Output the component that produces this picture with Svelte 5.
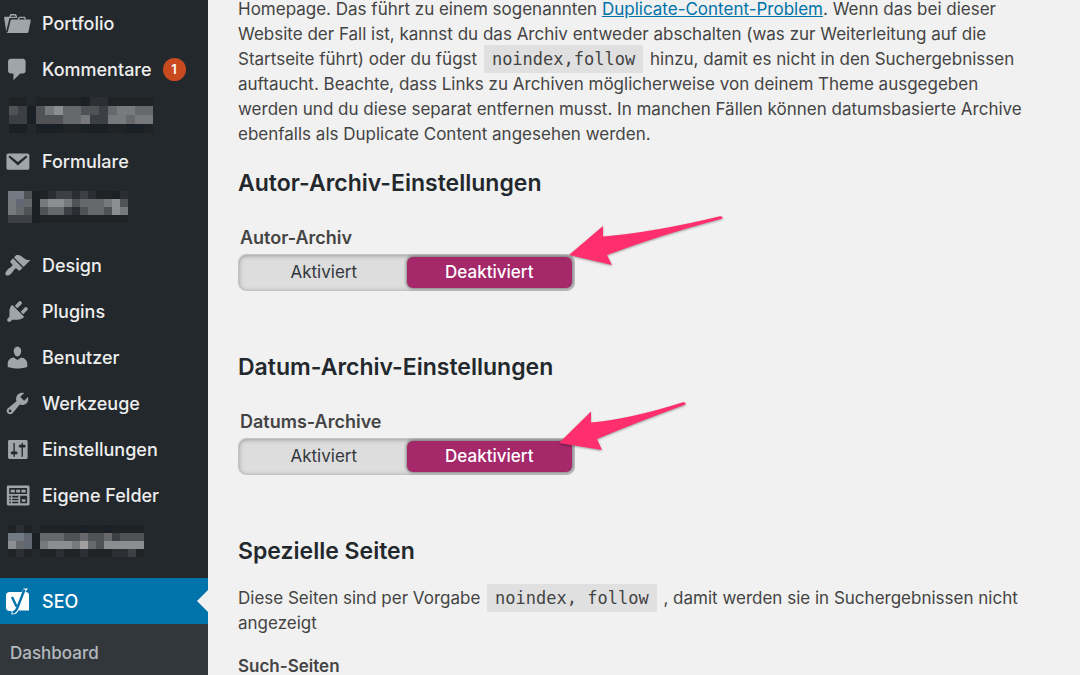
<script lang="ts">
  interface IMenuItem {
    label?: string;
    icon?: string;
    count?: number;
    mosaic?: { cell: number; left: number; rows: string[] };
  }

  // one letter per square, see shades
  const shades: Record<string, string> = {
    a: "#1b1f26",
    b: "#1f2326",
    c: "#2b2f33",
    d: "#3c3f44",
    e: "#505256",
    f: "#66686c",
    g: "#77797d",
    h: "#8c8e91",
    i: "#a0a0a1",
    m: "#606772",
    n: "#747a84",
  };

  const icons: Record<string, string> = {
    portfolio:
      "M4 5H.78c-.37 0-.74.32-.69.84l1.56 9.99S3.5 8.47 3.86 6.7c.11-.53.61-.7.98-.7H10s-.7-2.08-.77-2.31C9.11 3.25 8.89 3 8.45 3H5.14c-.36 0-.7.23-.8.64C4.25 4.04 4 5 4 5zm4.88 0h-4s.42-1 .87-1h2.13c.48 0 1 1 1 1zM2.67 16.25c-.31.47-.76.75-1.26.75h15.73c.54 0 .92-.31 1.03-.83.44-2.19 1.68-8.44 1.68-8.44.07-.5-.3-.73-.62-.73H16V5.53c0-.16-.26-.53-.66-.53h-3.76c-.52 0-.87.58-.87.58L10 7H5.59c-.32 0-.63.19-.69.5 0 0-1.59 6.7-1.72 7.33-.07.37-.22.99-.51 1.42zM15.38 7H11s.58-1 1.13-1h2.29c.71 0 .96 1 .96 1z",
    comments:
      "M5 2h9c1.1 0 2 .9 2 2v7c0 1.1-.9 2-2 2h-2l-5 5v-5H5c-1.1 0-2-.9-2-2V4c0-1.1.9-2 2-2z",
    mail: "M3.2 4h14.2c.8 0 1.4.6 1.4 1.4v9.4c0 .8-.6 1.4-1.4 1.4H3.2c-.8 0-1.4-.6-1.4-1.4V5.4c0-.8.6-1.4 1.4-1.4zM4.3 5.5l-1 1.2 7 6.3 7-6.3-1-1.2-6 4.9z",
    design:
      "M14.48 11.06L7.41 3.99l1.5-1.5c.5-.56 2.3-.47 3.51.32 1.21.8 1.43 1.28 2.91 2.1 1.18.64 2.45 1.26 4.45.85zm-.71.71L6.7 4.7 4.93 6.47c-.39.39-.39 1.02 0 1.41l1.06 1.06c.39.39.39 1.03 0 1.42-.6.6-1.43 1.11-2.21 1.69-.35.26-.7.53-1.01.84C1.43 14.23.4 16.08 1.4 17.07c.99 1 2.84-.03 4.18-1.36.31-.31.58-.66.85-1.02.57-.78 1.08-1.61 1.69-2.21.39-.39 1.02-.39 1.41 0l1.06 1.06c.39.39 1.02.39 1.41 0z",
    plugins:
      "M13.11 4.36L9.87 7.6 8 5.73l3.24-3.24c.35-.34 1.05-.2 1.56.32.52.51.66 1.21.31 1.55zm-8 1.77l.91-1.12 9.01 9.01-1.19.84c-.71.71-2.63 1.16-3.82 1.16H6.14L4.9 17.26c-.59.59-1.54.59-2.12 0-.59-.58-.59-1.53 0-2.12l1.24-1.24v-3.88c0-1.13.4-3.19 1.09-3.89zm7.26 3.97l3.24-3.24c.34-.35 1.04-.21 1.55.31.52.51.66 1.21.31 1.55l-3.24 3.25z",
    users:
      "M10 9.25c-2.27 0-2.73-3.44-2.73-3.44C7 4.02 7.82 2 9.97 2c2.16 0 2.98 2.02 2.71 3.81 0 0-.41 3.44-2.68 3.44zm0 2.57L12.72 10c2.39 0 4.52 2.33 4.52 4.53v2.49s-3.65 1.13-7.24 1.13c-3.65 0-7.24-1.13-7.24-1.13v-2.49c0-2.25 1.94-4.48 4.47-4.48z",
    tools:
      "M16.68 9.77c-1.34 1.34-3.3 1.67-4.95.99l-5.41 6.52c-.99.99-2.59.99-3.58 0s-.99-2.59 0-3.57l6.52-5.42c-.68-1.65-.35-3.61.99-4.95 1.28-1.28 3.12-1.62 4.72-1.06l-2.89 2.89 2.82 2.82 2.86-2.87c.53 1.58.18 3.39-1.08 4.65zM3.81 16.21c.4.39 1.04.39 1.43 0 .4-.4.4-1.04 0-1.43-.39-.4-1.03-.4-1.43 0-.39.39-.39 1.03 0 1.43z",
    settings:
      "M17.5 16V4c0-.55-.45-1-1-1H4c-.55 0-1 .45-1 1v12c0 .55.45 1 1 1h12.5c.55 0 1-.45 1-1zM8 11.5h1c.55 0 1 .45 1 1s-.45 1-1 1H8v1.5c0 .28-.22.5-.5.5s-.5-.22-.5-.5v-1.5H6c-.55 0-1-.45-1-1s.45-1 1-1h1V5.5c0-.28.22-.5.5-.5s.5.22.5.5zm5-3h-1c-.55 0-1-.45-1-1s.45-1 1-1h1V5.5c0-.28.22-.5.5-.5s.5.22.5.5v1h1c.55 0 1 .45 1 1s-.45 1-1 1h-1V15c0 .28-.22.5-.5.5s-.5-.22-.5-.5z",
    fields:
      "M3 2.600h15c.5 0 .9.4.9.9v13c0 .5-.4.9-.9.9H3c-.5 0-.9-.4-.9-.9v-13c0-.5.4-.9.9-.9zM3.900 4.500v4.300h13.200V4.500zM5 5.700h3v2H5zm4 0h3v2H9zm4 0h3v2h-3zM3.900 10.200v1.200h1.200v-1.200zm2.200 0v1.200h4.500v-1.200zm-2.200 2.200v1.200h1.200v-1.200zm2.200 0v1.200h4.500v-1.200zm-2.200 2.200v1.200h1.200v-1.200zm2.200 0v1.200h4.500v-1.200zM12 10.200v5.600h5.100v-5.600zm1.200 2.600h2.700v1.800h-2.700z",
  };

  const contentMenu: IMenuItem[] = [
    { label: "Portfolio", icon: "portfolio" },
    { label: "Kommentare", icon: "comments", count: 1 },
    {
      mosaic: {
        cell: 9,
        left: 9,
        rows: ["bb.bbbbbaccbbbbb", "edaeghffeedfggff", "ddaeeeffgddggfgg", "aa.aaabbaaabbaab"],
      },
    },
    { label: "Formulare", icon: "mail" },
    {
      mosaic: {
        cell: 8,
        left: 8,
        rows: ["nneabcddcdcbbac", "gmfaghhgefffghe", "gfeaeffdceffehg", "dddabbbbbbbbbbb"],
      },
    },
  ];

  const adminMenu: IMenuItem[] = [
    { label: "Design", icon: "design" },
    { label: "Plugins", icon: "plugins" },
    { label: "Benutzer", icon: "users" },
    { label: "Werkzeuge", icon: "tools" },
    { label: "Einstellungen", icon: "settings" },
    { label: "Eigene Felder", icon: "fields" },
    {
      mosaic: {
        cell: 8,
        left: 8,
        rows: ["bcb.bbbbbabbabbbb", "nnmafffeefeefdeee", "hfmaghhhgifehhhhh", "bcb.bbcbbcbbbccdb"],
      },
    },
  ];

  const archives = $state([
    {
      id: "author",
      title: "Autor-Archiv-Einstellungen",
      label: "Autor-Archiv",
      value: "off",
      arrow: "M9 43L43 14V24.500Q95 20 160 4.200Q163 4 162.500 6.500Q100 23 47 43L52 53Z",
    },
    {
      id: "date",
      title: "Datum-Archiv-Einstellungen",
      label: "Datums-Archive",
      value: "off",
      arrow: "M-1 47L31 15.500V26.500Q70 23 123 6.200Q126 6 125.500 8.500Q75 27 37 43L42 54Z",
    },
  ]);
</script>

{#snippet menu(items: IMenuItem[])}
  <ul class="menu">
    {#each items as item}
      <li>
        {#if item.mosaic}
          {@const m = item.mosaic}
          <a class="menu-item masked" href="#plugin" aria-label="Plugin">
            <svg
              width={(m.rows[0].length + 2) * m.cell}
              height={m.rows.length * m.cell}
              shape-rendering="crispEdges"
            >
              {#each m.rows as row, y}
                {#each row as shade, x}
                  {#if shades[shade]}
                    <rect
                      x={m.left + x * m.cell}
                      y={y * m.cell}
                      width={m.cell}
                      height={m.cell}
                      fill={shades[shade]}
                    />
                  {/if}
                {/each}
              {/each}
            </svg>
          </a>
        {:else}
          <a class="menu-item" href="#{item.icon}">
            <svg class="icon" viewBox="0 0 20 20" aria-hidden="true">
              <path fill-rule="evenodd" d={icons[item.icon ?? ""]} />
            </svg>
            <span>{item.label}</span>
            {#if item.count}
              <span class="count">{item.count}</span>
            {/if}
          </a>
        {/if}
      </li>
    {/each}
  </ul>
{/snippet}

<div class="admin">
  <nav class="sidebar">
    {@render menu(contentMenu)}
    {@render menu(adminMenu)}

    <a class="menu-item current" href="#seo">
      <svg class="icon" viewBox="0 0 27 27" aria-hidden="true">
        <path
          fill="#fff"
          d="M5.500 4H18l1.500-3.500H24L21.500 4C23.800 4 25 5.200 25 7v15.500H14.500C13 25.500 11 26.500 7.500 26.500V23H5.500C3.300 23 2 21.700 2 19.500v-12C2 5.300 3.300 4 5.500 4z"
        />
        <path
          fill="none"
          stroke="#0073aa"
          stroke-width="2.400"
          d="M8 9L12.500 18.500M20.500 1.500L13.500 19.500Q11.800 24 8.500 24.500"
        />
      </svg>
      <span>SEO</span>
    </a>
    <ul class="submenu">
      <li><a href="#dashboard">Dashboard</a></li>
    </ul>
  </nav>

  <main class="content">
    <p>
      Homepage. Das führt zu einem sogenannten
      <a href="#duplicate-content">Duplicate-Content-Problem</a>. Wenn das bei dieser Website der
      Fall ist, kannst du das Archiv entweder abschalten (was zur Weiterleitung auf die Startseite
      führt) oder du fügst <code>noindex,follow</code> hinzu, damit es nicht in den
      Suchergebnissen auftaucht. Beachte, dass Links zu Archiven möglicherweise von deinem Theme
      ausgegeben werden und du diese separat entfernen musst. In manchen Fällen können
      datumsbasierte Archive ebenfalls als Duplicate Content angesehen werden.
    </p>

    {#each archives as archive (archive.id)}
      <section>
        <h2>{archive.title}</h2>
        <fieldset>
          <legend>{archive.label}</legend>
          <div class="switch">
            <label>
              <input type="radio" name={archive.id} value="on" bind:group={archive.value} />
              <span>Aktiviert</span>
            </label>
            <label>
              <input type="radio" name={archive.id} value="off" bind:group={archive.value} />
              <span>Deaktiviert</span>
            </label>
            <svg class="arrow" viewBox="-2 0 168 60" aria-hidden="true">
              <path d={archive.arrow} />
            </svg>
          </div>
        </fieldset>
      </section>
    {/each}

    <h2>Spezielle Seiten</h2>
    <p>
      Diese Seiten sind per Vorgabe <code>noindex, follow</code> , damit werden sie in
      Suchergebnissen nicht angezeigt
    </p>
    <h3>Such-Seiten</h3>
  </main>
</div>

<style>
  :global(body) {
    background: #f1f1f1;
    color: #444;
    font-family: Inter, sans-serif;
    font-size: 17px;
    line-height: 25px;
    overflow: hidden;
  }
  .admin {
    display: flex;
    height: 100vh;
  }
  .sidebar {
    flex: 0 0 208px;
    background: #23282d;
    font-size: 18px;
    font-weight: 500;
  }
  ul {
    margin: 0;
    padding: 0;
    list-style: none;
  }
  .menu {
    margin-bottom: 12px;
  }
  .menu + .menu {
    margin-bottom: 14px;
  }
  .menu-item {
    display: flex;
    align-items: center;
    gap: 11px;
    height: 46px;
    padding-left: 4px;
    color: #eee;
    text-decoration: none;
  }
  .menu-item.masked {
    padding-left: 0;
  }
  .icon {
    width: 27px;
    height: 27px;
    fill: #a0a5aa;
  }
  .count {
    width: 23px;
    border-radius: 12px;
    background: #ca4a1f;
    color: #fff;
    font-size: 13px;
    font-weight: 600;
    line-height: 23px;
    text-align: center;
  }
  .current {
    position: relative;
    background: #0073aa;
    color: #fff;
  }
  .current::after {
    content: "";
    position: absolute;
    right: 0;
    border: 11px solid transparent;
    border-left: 0;
    border-right-color: #f1f1f1;
  }
  .submenu {
    padding: 16px 10px 100px;
    background: #32373c;
  }
  .submenu a {
    color: #b4b9be;
    font-size: 17px;
    text-decoration: none;
  }
  .content {
    flex: 1;
    min-width: 0;
    margin-top: -4px;
    padding: 1px 45px 0 30px;
  }
  p {
    margin: 0;
  }
  p a {
    color: #0073aa;
  }
  code {
    margin: 0 2px;
    padding: 4px 8px;
    background: #e0e0e0;
    font-family: "DejaVu Sans Mono", monospace;
    font-size: 17px;
    line-height: 20px;
  }
  h2 {
    margin: 0;
    padding: 21px 0 20px;
    color: #23282d;
    font-size: 23px;
    font-weight: 600;
    line-height: 30px;
  }
  h3 {
    margin: 18px 0 0;
    font-size: 17px;
    font-weight: 600;
  }
  fieldset {
    margin: 0 0 40px;
    padding: 0;
    border: 0;
  }
  legend {
    padding: 7px 2px 4px;
    font-size: 18px;
    font-weight: 600;
  }
  .switch {
    position: relative;
    display: grid;
    grid-template-columns: 1fr 1fr;
    box-sizing: border-box;
    width: 337px;
    height: 37px;
    padding: 2px;
    border: 1px solid #c4c4c4;
    border-radius: 8px;
    background: #ddd;
    box-shadow: inset 0 1px 4px rgba(0, 0, 0, 0.3);
  }
  .switch label {
    display: grid;
    cursor: pointer;
  }
  .switch input {
    grid-area: 1 / 1;
    margin: 0;
    opacity: 0;
  }
  .switch span {
    grid-area: 1 / 1;
    border-radius: 6px;
    color: #32373c;
    line-height: 31px;
    text-align: center;
  }
  .switch input:checked + span {
    background: #a4286a;
    box-shadow: 0 0 3px 1px rgba(0, 0, 0, 0.4);
    color: #fff;
    font-weight: 500;
  }
  .arrow {
    position: absolute;
    left: 319px;
    top: -43px;
    width: 168px;
    height: 60px;
    fill: #ff2f6d;
    filter: drop-shadow(0 1px 1px rgba(0, 0, 0, 0.35));
    pointer-events: none;
  }
</style>
